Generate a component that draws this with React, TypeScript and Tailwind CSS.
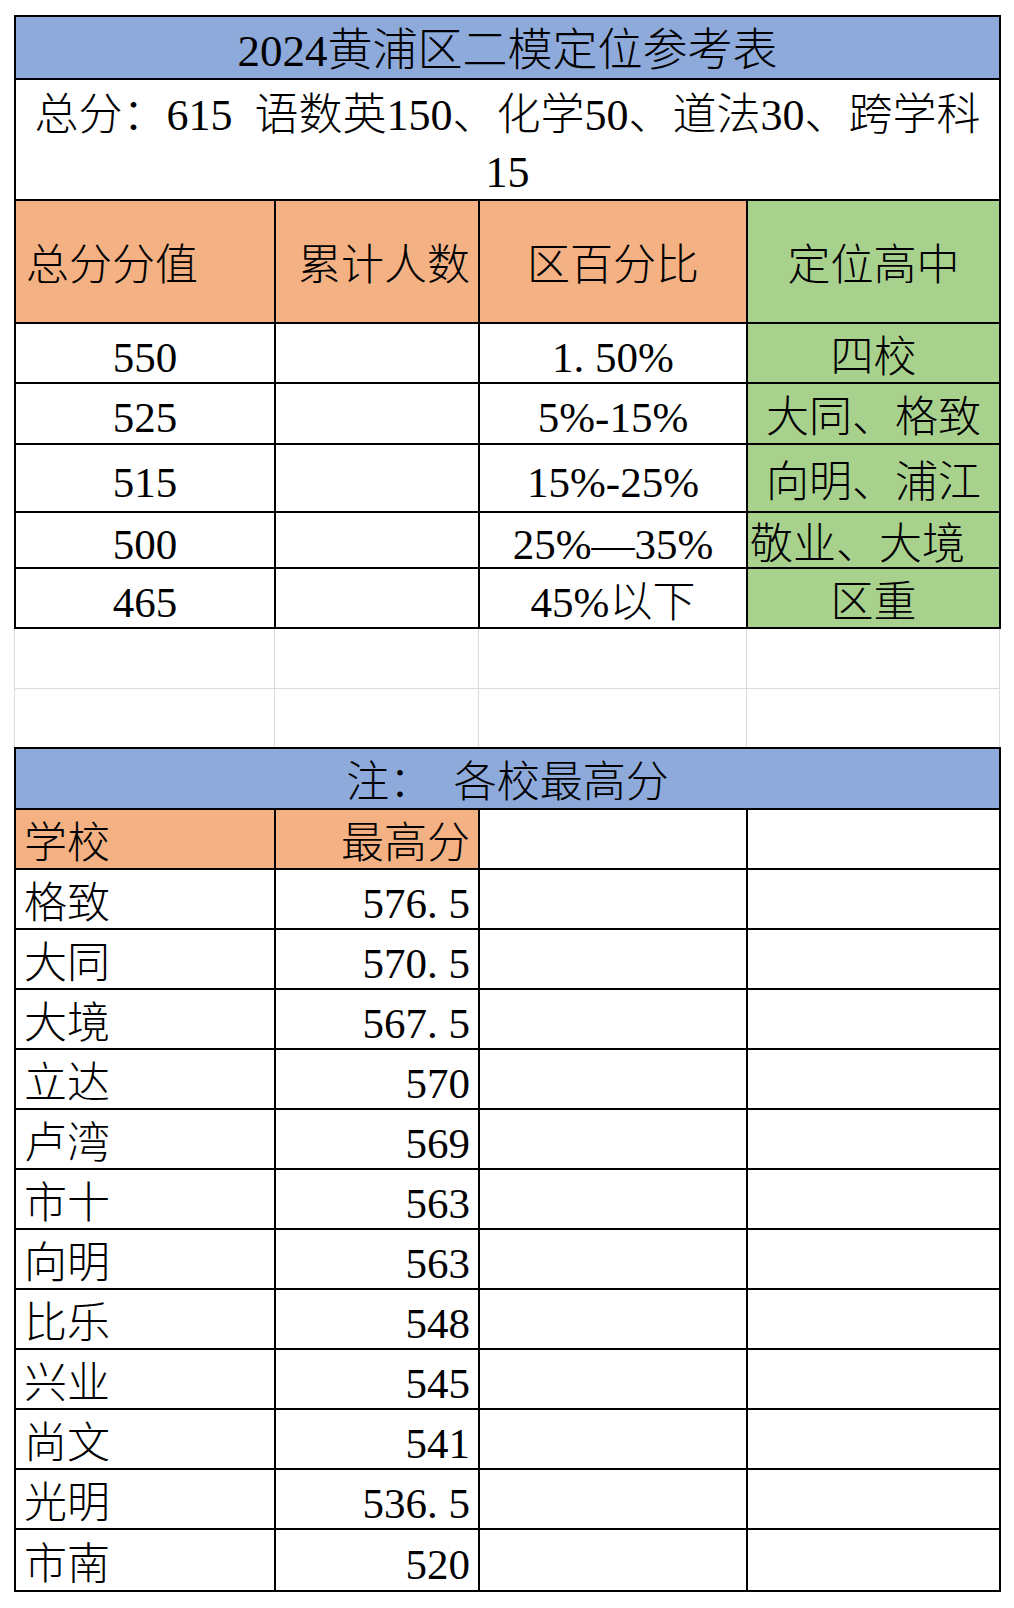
import React from "react";

const FONT = "font-['Liberation_Serif','Noto_Sans_CJK_SC',serif] font-light";
const GRID = "grid grid-cols-[260px_204px_268px_253px]";
const CELL = "border-r-2 border-b-2 border-black flex items-center pt-2 leading-none";

function Num({ s }: { s: string }) {
  const parts = s.split(".");
  if (parts.length === 1) return <>{s}</>;
  return (
    <>
      {parts[0]}
      <span className="inline-block w-[0.5em] text-left">.</span>
      {parts[1]}
    </>
  );
}

const topRows: { h: string; a: string; c: string; d: string; left?: boolean }[] = [
  { h: "h-[60px]", a: "550", c: "1.50%", d: "四校" },
  { h: "h-[61px]", a: "525", c: "5%-15%", d: "大同、格致" },
  { h: "h-[68px]", a: "515", c: "15%-25%", d: "向明、浦江" },
  { h: "h-[56px]", a: "500", c: "25%—35%", d: "敬业、大境", left: true },
  { h: "h-[60px]", a: "465", c: "45%以下", d: "区重" },
];

const schools: [string, string][] = [
  ["格致", "576.5"],
  ["大同", "570.5"],
  ["大境", "567.5"],
  ["立达", "570"],
  ["卢湾", "569"],
  ["市十", "563"],
  ["向明", "563"],
  ["比乐", "548"],
  ["兴业", "545"],
  ["尚文", "541"],
  ["光明", "536.5"],
  ["市南", "520"],
];

export default function App() {
  return (
    <div className={`min-h-[1608px] w-[1014px] bg-white pt-[15px] pl-[14px] text-black ${FONT}`}>
      <div className="w-[987px]">
        {/* Section 1 */}
        <div className={`${GRID} border-l-2 border-t-2 border-black`}>
          <div className={`${CELL} col-span-4 h-[63px] justify-center bg-[#8eaadb] text-[45px]`}>
            2024黄浦区二模定位参考表
          </div>
          <div className="col-span-4 h-[121px] border-r-2 border-b-2 border-black flex items-center justify-center pt-2 text-center text-[44px] leading-[57px]">
            <div className="whitespace-pre">
              {"总分：615  语数英150、化学50、道法30、跨学科"}
              <br />
              15
            </div>
          </div>
          <div className={`${CELL} h-[123px] bg-[#f4b183] pl-[10px] text-[43px]`}>总分分值</div>
          <div className={`${CELL} h-[123px] bg-[#f4b183] justify-end pr-[8px] text-[43px]`}>累计人数</div>
          <div className={`${CELL} h-[123px] bg-[#f4b183] justify-center text-[43px]`}>区百分比</div>
          <div className={`${CELL} h-[123px] bg-[#a9d18e] justify-center text-[43px]`}>定位高中</div>
          {topRows.map((r) => (
            <React.Fragment key={r.a}>
              <div className={`${CELL} ${r.h} justify-center text-[43px]`}>{r.a}</div>
              <div className={`${CELL} ${r.h}`}></div>
              <div className={`${CELL} ${r.h} justify-center text-[43px]`}>
                <Num s={r.c} />
              </div>
              <div
                className={`${CELL} ${r.h} bg-[#a9d18e] text-[43px] ${
                  r.left ? "justify-start pl-[2px]" : "justify-center"
                }`}
              >
                {r.d}
              </div>
            </React.Fragment>
          ))}
        </div>

        {/* Empty gridline rows */}
        <div className={`${GRID} border-l border-[#dcdcdc]`}>
          {[0, 1, 2, 3].map((i) => (
            <div key={`g1-${i}`} className="h-[60px] border-r border-b border-[#dcdcdc]"></div>
          ))}
          {[0, 1, 2, 3].map((i) => (
            <div key={`g2-${i}`} className="h-[58px] border-r border-[#dcdcdc]"></div>
          ))}
        </div>

        {/* Section 2 */}
        <div className={`${GRID} border-l-2 border-t-2 border-black`}>
          <div className={`${CELL} col-span-4 h-[61px] justify-center bg-[#8eaadb] text-[43px] whitespace-pre`}>
            {"注：  各校最高分"}
          </div>
          <div className={`${CELL} h-[60px] bg-[#f4b183] pl-[8px] text-[43px]`}>学校</div>
          <div className={`${CELL} h-[60px] bg-[#f4b183] justify-end pr-[8px] text-[43px]`}>最高分</div>
          <div className={`${CELL} h-[60px]`}></div>
          <div className={`${CELL} h-[60px]`}></div>
          {schools.map(([n, s], i) => {
            const h = i === schools.length - 1 ? "h-[62px]" : "h-[60px]";
            return (
              <React.Fragment key={n + i}>
                <div className={`${CELL} ${h} pl-[8px] text-[43px]`}>{n}</div>
                <div className={`${CELL} ${h} justify-end pr-[8px] text-[43px]`}>
                  <Num s={s} />
                </div>
                <div className={`${CELL} ${h}`}></div>
                <div className={`${CELL} ${h}`}></div>
              </React.Fragment>
            );
          })}
        </div>
      </div>
    </div>
  );
}
